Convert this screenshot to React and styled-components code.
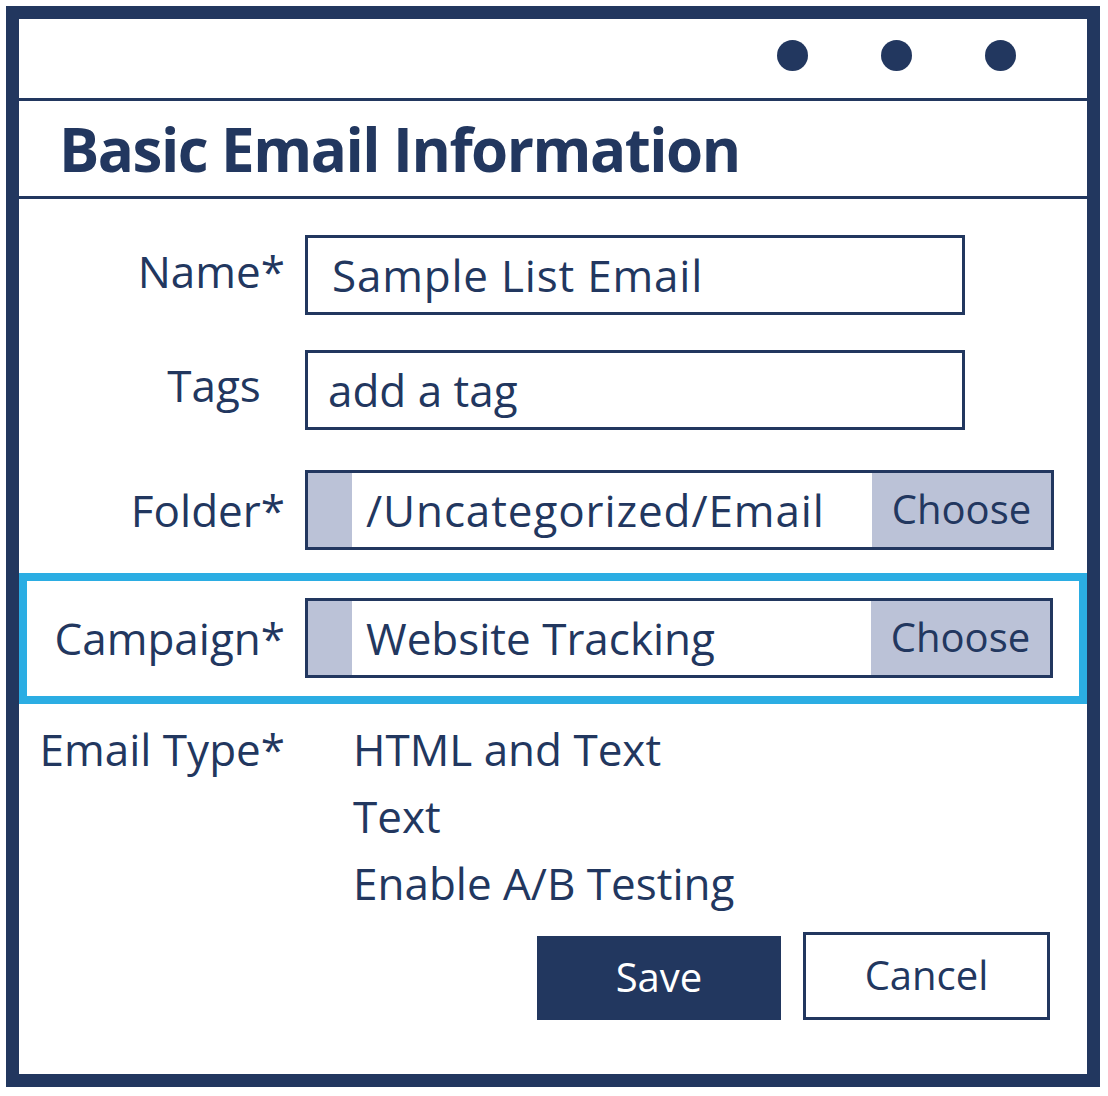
import React from 'react';
import styled, { createGlobalStyle } from 'styled-components';

const navy = '#22375f';
const slate = '#bbc2d7';
const cyan = '#2bade3';

const GlobalStyle = createGlobalStyle`
  html, body {
    margin: 0;
    padding: 0;
    background: #fff;
  }
  body {
    font-family: "Open Sans", "Noto Sans", sans-serif;
    color: ${navy};
  }
`;

const Frame = styled.div`
  box-sizing: border-box;
  margin: 6px 0 0 6px;
  width: 1094px;
  height: 1081px;
  border: 13px solid ${navy};
  display: flex;
  flex-direction: column;
`;

const TopBar = styled.div`
  height: 82px;
  display: flex;
  justify-content: flex-end;
  align-items: center;
  gap: 73px;
  padding: 0 71px 6px 0;
  box-sizing: border-box;
  border-bottom: 3px solid ${navy};
`;

const Dot = styled.span`
  width: 31px;
  height: 31px;
  border-radius: 50%;
  background: ${navy};
`;

const TitleBar = styled.div`
  height: 95px;
  display: flex;
  align-items: center;
  padding-left: 40px;
  border-bottom: 3px solid ${navy};
`;

const Title = styled.h1`
  margin: 0;
  font-size: 60px;
  font-weight: 700;
  letter-spacing: -1.5px;
`;

const Body = styled.div`
  padding-top: 36px;
  display: flex;
  flex-direction: column;
`;

const Row = styled.div`
  display: grid;
  grid-template-columns: ${({ labelW }) => labelW}px auto;
  column-gap: 20px;
  align-items: center;
  margin-top: ${({ gap }) => gap || 0}px;
`;

const Label = styled.div`
  text-align: right;
  font-size: 44px;
  line-height: 1;
  padding-bottom: ${({ lift }) => lift || 0}px;
`;

const Ghost = styled.span`
  visibility: hidden;
`;

const Field = styled.div`
  box-sizing: border-box;
  width: ${({ w }) => w}px;
  height: 80px;
  border: 3px solid ${navy};
  display: flex;
  align-items: stretch;
  background: #fff;
`;

const FieldText = styled.div`
  flex: 1;
  display: flex;
  align-items: center;
  padding-left: ${({ pad }) => pad}px;
  font-size: 44px;
  letter-spacing: ${({ track }) => track || 0}px;
  white-space: nowrap;
`;

const Stub = styled.div`
  width: 44px;
  background: ${slate};
`;

const ChooseBtn = styled.div`
  width: 179px;
  background: ${slate};
  display: flex;
  align-items: center;
  justify-content: center;
  font-size: 40px;
  padding-bottom: 4px;
  box-sizing: border-box;
`;

const Highlight = styled.div`
  margin-top: 23px;
  border: 8px solid ${cyan};
  padding: 17px 0 18px;
`;

const TypeRow = styled.div`
  display: grid;
  grid-template-columns: 266px auto;
  column-gap: 68px;
  margin-top: 12px;
  font-size: 44px;
  line-height: 67px;
`;

const TypeLabel = styled.div`
  text-align: right;
`;

const Options = styled.div`
  display: flex;
  flex-direction: column;
`;

const Actions = styled.div`
  display: flex;
  justify-content: flex-end;
  align-items: flex-end;
  gap: 22px;
  padding-right: 37px;
  margin-top: 15px;
`;

const Button = styled.button`
  box-sizing: border-box;
  width: ${({ primary }) => (primary ? 244 : 247)}px;
  height: ${({ primary }) => (primary ? 84 : 88)}px;
  border: 3px solid ${navy};
  background: ${({ primary }) => (primary ? navy : '#fff')};
  color: ${({ primary }) => (primary ? '#fff' : navy)};
  font-family: inherit;
  font-size: 40px;
  padding: 0 0 4px;
  cursor: pointer;
`;

export default function App() {
  return (
    <>
      <GlobalStyle />
      <Frame>
        <TopBar>
          <Dot />
          <Dot />
          <Dot />
        </TopBar>
        <TitleBar>
          <Title>Basic Email Information</Title>
        </TitleBar>
        <Body>
          <Row labelW={266}>
            <Label lift={8}>Name*</Label>
            <Field w={660}>
              <FieldText pad={24} track={0.8}>Sample List Email</FieldText>
            </Field>
          </Row>
          <Row labelW={266} gap={35}>
            <Label lift={10}>Tags<Ghost>*</Ghost></Label>
            <Field w={660}>
              <FieldText pad={20}>add a tag</FieldText>
            </Field>
          </Row>
          <Row labelW={266} gap={40}>
            <Label>Folder*</Label>
            <Field w={749}>
              <Stub />
              <FieldText pad={14} track={0.9}>/Uncategorized/Email</FieldText>
              <ChooseBtn>Choose</ChooseBtn>
            </Field>
          </Row>
          <Highlight>
            <Row labelW={258}>
              <Label>Campaign*</Label>
              <Field w={748}>
                <Stub />
                <FieldText pad={14}>Website Tracking</FieldText>
                <ChooseBtn>Choose</ChooseBtn>
              </Field>
            </Row>
          </Highlight>
          <TypeRow>
            <TypeLabel>Email Type*</TypeLabel>
            <Options>
              <span>HTML and Text</span>
              <span>Text</span>
              <span>Enable A/B Testing</span>
            </Options>
          </TypeRow>
          <Actions>
            <Button primary>Save</Button>
            <Button>Cancel</Button>
          </Actions>
        </Body>
      </Frame>
    </>
  );
}
